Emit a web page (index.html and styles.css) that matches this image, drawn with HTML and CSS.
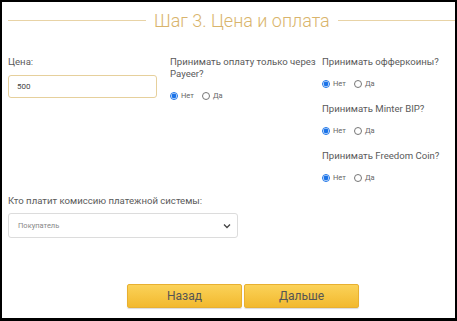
FILE: index.html
```html
<!DOCTYPE html>
<html lang="ru">
<head>
    <meta charset="UTF-8">
    <title>Шаг 3. Цена и оплата</title>
    <link rel="stylesheet" href="styles.css">
</head>
<body>
    <div class="frame">
        <div class="step-title">
            <span class="line line-left"></span>
            <h1>Шаг 3. Цена и оплата</h1>
            <span class="line"></span>
        </div>

        <div class="fields">
            <div class="col">
                <label class="label">Цена:</label>
                <input class="price" type="text" value="500">
            </div>
            <div class="col">
                <div class="label">Принимать оплату только через Payeer?</div>
                <div class="radios">
                    <label><input type="radio" name="payeer" checked> Нет</label>
                    <label><input type="radio" name="payeer"> Да</label>
                </div>
            </div>
            <div class="col">
                <div class="label">Принимать офферкоины?</div>
                <div class="radios">
                    <label><input type="radio" name="offer" checked> Нет</label>
                    <label><input type="radio" name="offer"> Да</label>
                </div>
                <div class="label">Принимать Minter BIP?</div>
                <div class="radios">
                    <label><input type="radio" name="bip" checked> Нет</label>
                    <label><input type="radio" name="bip"> Да</label>
                </div>
                <div class="label">Принимать Freedom Coin?</div>
                <div class="radios">
                    <label><input type="radio" name="freedom" checked> Нет</label>
                    <label><input type="radio" name="freedom"> Да</label>
                </div>
            </div>
        </div>

        <div class="commission">
            <div class="label">Кто платит комиссию платежной системы:</div>
            <div class="select">
                <span>Покупатель</span>
                <svg width="8" height="6" viewBox="0 0 8 6"><path d="M1 1.5 L4 4.5 L7 1.5" fill="none" stroke="#444" stroke-width="1.3"/></svg>
            </div>
        </div>

        <div class="buttons">
            <button class="btn">Назад</button>
            <button class="btn">Дальше</button>
        </div>
    </div>
</body>
</html>
```

FILE: styles.css
```css
html, body {
    margin: 0;
    padding: 0;
    background: #fff;
    font-family: Roboto, "Noto Sans", sans-serif;
    color: #5a5a5a;
}
.frame {
    box-sizing: border-box;
    width: 457px;
    height: 321px;
    border: 2px solid #000;
    border-bottom-width: 3px;
    padding: 0 6px;
}
.step-title {
    display: flex;
    align-items: center;
    gap: 8px;
    height: 36px;
    margin-right: -6px;
}
.step-title .line {
    flex: 1;
    height: 1px;
    background: #e8d3a6;
}
.step-title .line-left {
    flex: 0 0 138px;
}
.step-title h1 {
    margin: 0;
    font-weight: 300;
    font-size: 18px;
    color: #d9b46c;
}
.fields {
    display: grid;
    grid-template-columns: 149px 152px 130px;
    column-gap: 13px;
    margin-top: 18px;
}
.fields .col:nth-child(3) {
    margin-left: -13px;
}
.label {
    display: block;
    font-size: 9.6px;
    line-height: 12px;
    color: #5a5a5a;
}
.price {
    display: block;
    box-sizing: border-box;
    width: 149px;
    height: 23px;
    margin-top: 7px;
    padding: 0 8px;
    border: 1px solid #e6d09c;
    border-radius: 3px;
    font-family: inherit;
    font-size: 8px;
    color: #444;
    outline: none;
}
.radios {
    display: flex;
    gap: 8px;
    margin: 11px 0 15px;
    font-size: 7.5px;
    color: #666;
}
.radios label {
    display: flex;
    align-items: center;
    gap: 3px;
}
.radios input {
    margin: 0;
    width: 8px;
    height: 8px;
    accent-color: #1a73e8;
}
.commission {
    margin-top: -2px;
}
.select {
    box-sizing: border-box;
    display: flex;
    align-items: center;
    justify-content: space-between;
    width: 230px;
    height: 25px;
    margin-top: 6px;
    padding: 0 6px 0 9px;
    border: 1px solid #dcdcdc;
    border-radius: 3px;
    font-size: 7.5px;
    color: #888;
}
.buttons {
    display: flex;
    gap: 2px;
    margin: 46px 0 0 119px;
}
.btn {
    width: 115px;
    height: 24px;
    border: 1px solid #e8b030;
    border-radius: 2px;
    background: linear-gradient(#fbd259, #f2b92e);
    font-family: inherit;
    font-size: 12px;
    color: #555;
    box-shadow: 0 1px 1px rgba(0, 0, 0, 0.15);
}
```
